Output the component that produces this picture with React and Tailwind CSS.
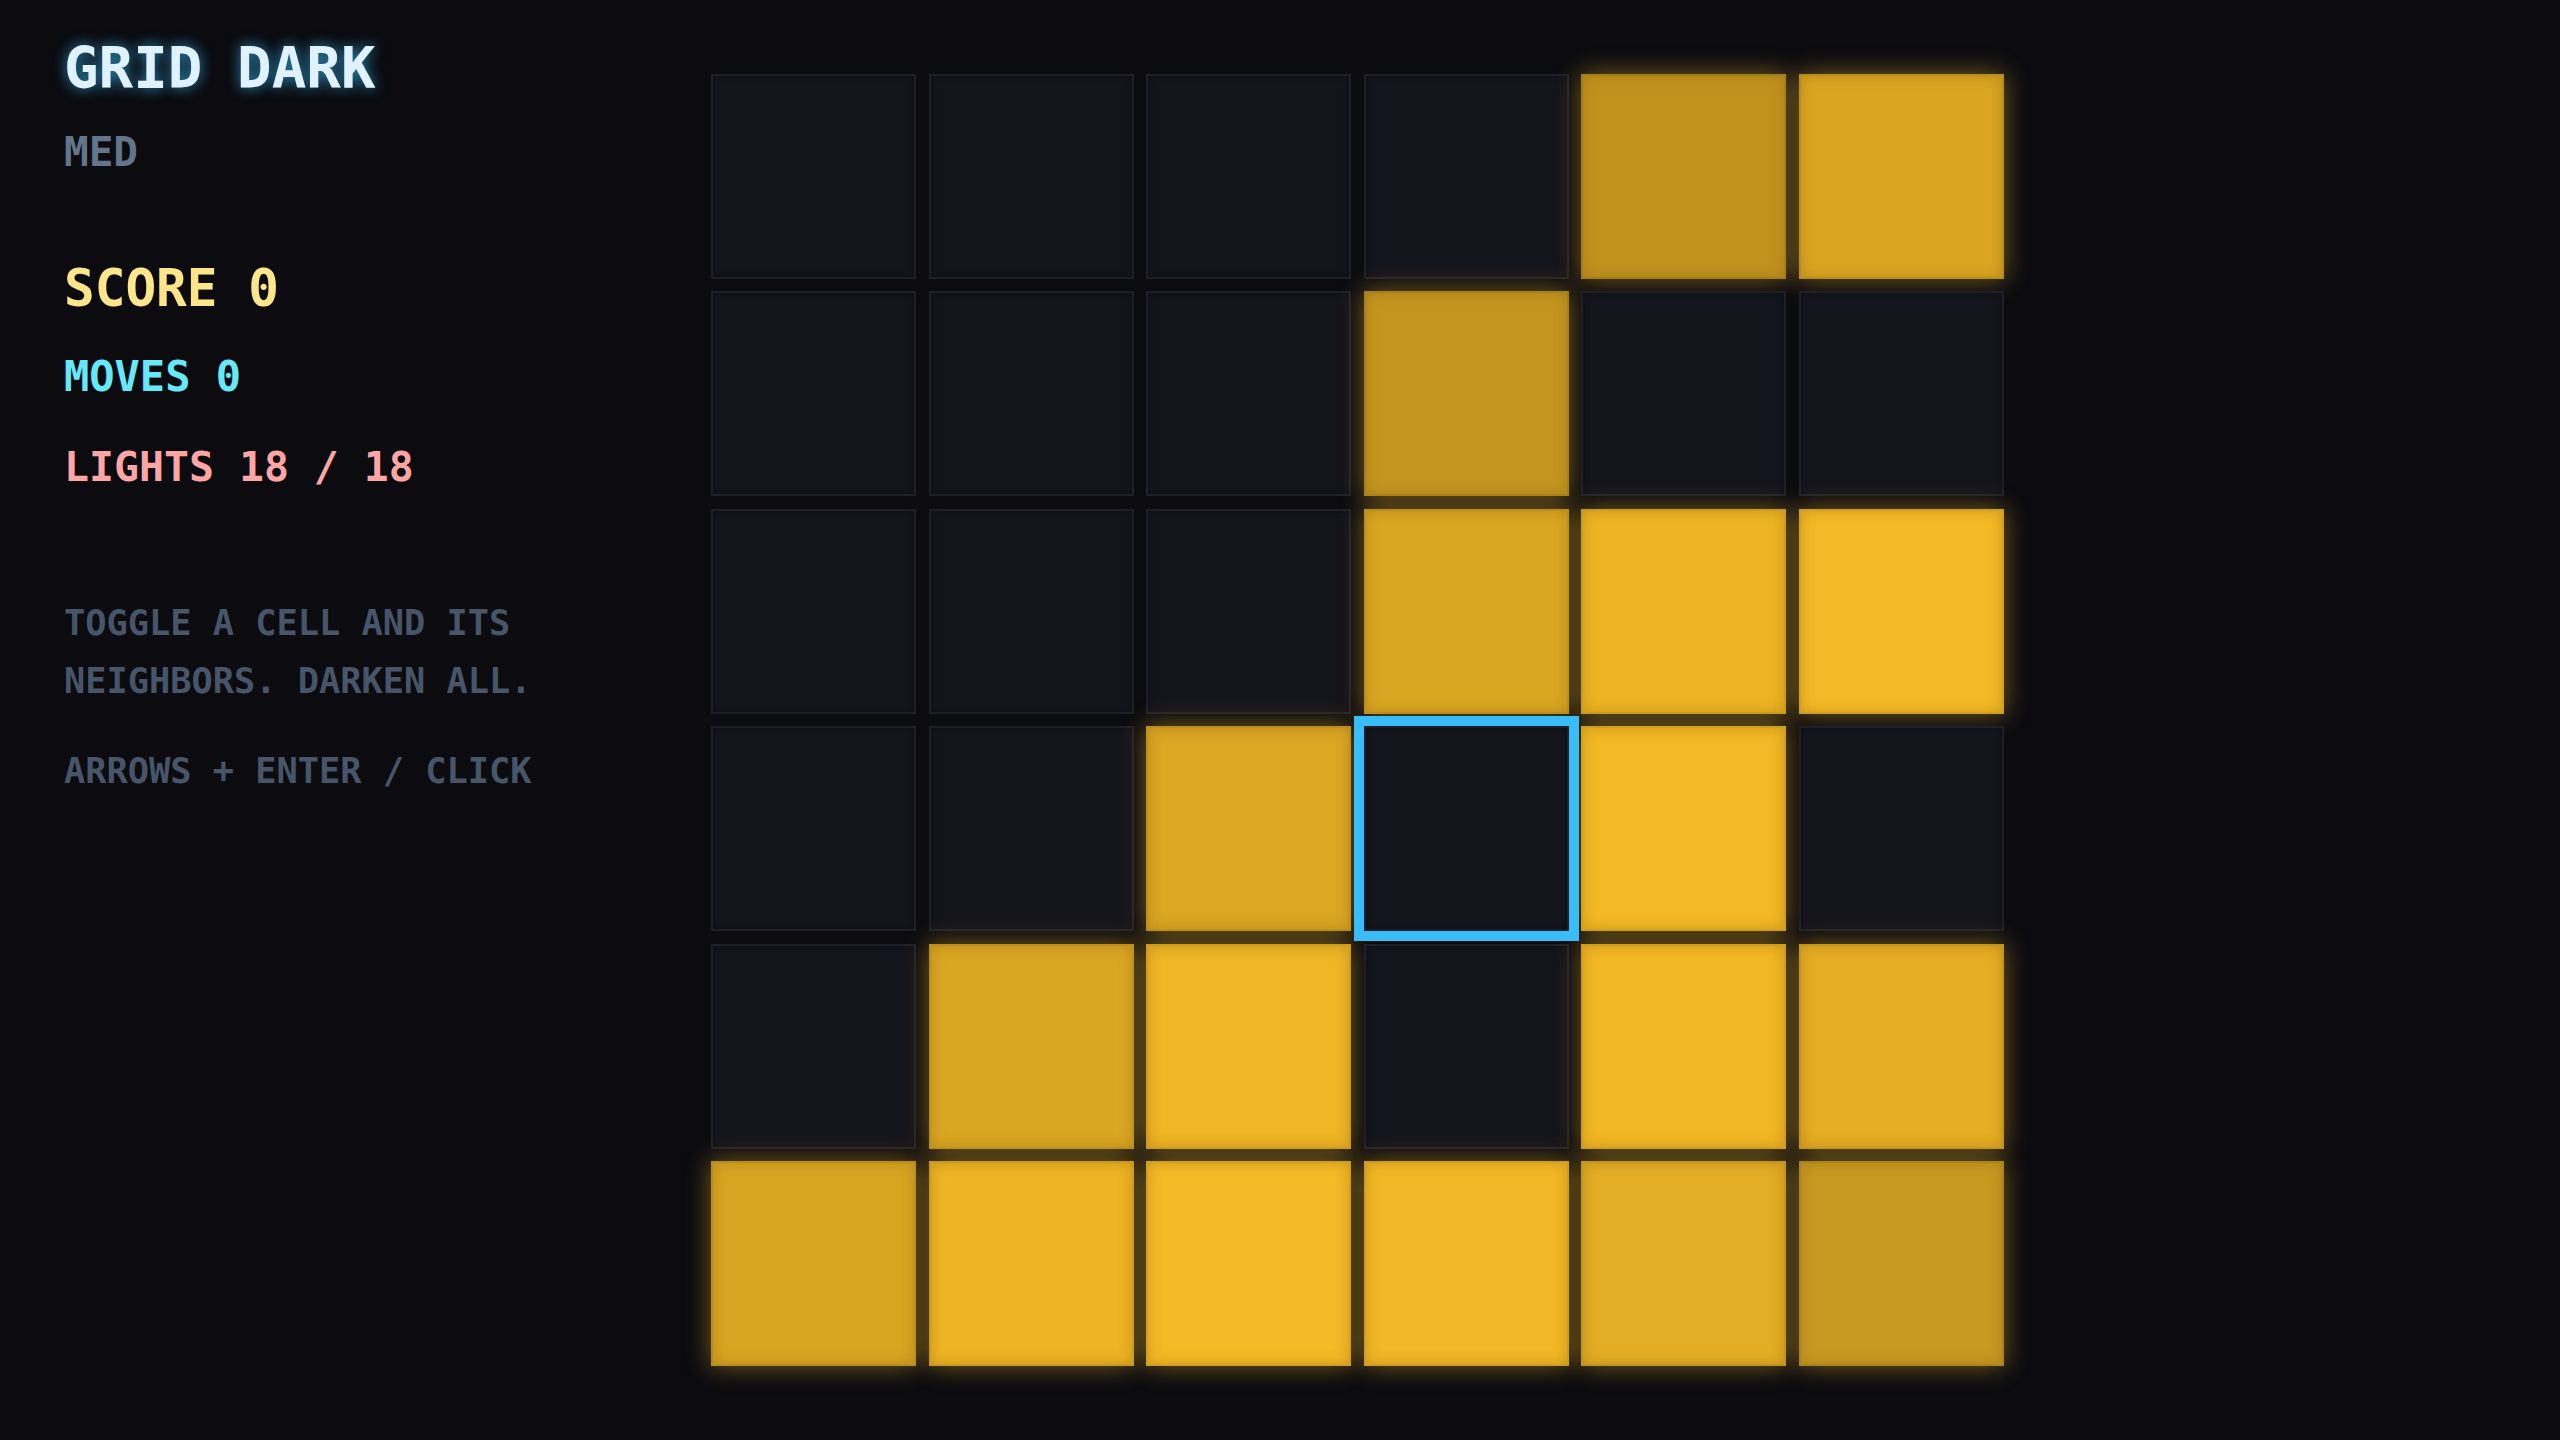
const BOARD = [
  [null, null, null, null, 'bg-[#c0931f]', 'bg-[#daa622]'],
  [null, null, null, 'bg-[#c49620]', null, null],
  [null, null, null, 'bg-[#daa723]', 'bg-[#edb524]', 'bg-[#f5ba27]'],
  [null, null, 'bg-[#dba724]', null, 'bg-[#f4b926]', null],
  [null, 'bg-[#daa723]', 'bg-[#efb625]', null, 'bg-[#f3b826]', 'bg-[#e6ae24]'],
  ['bg-[#d8a622]', 'bg-[#edb524]', 'bg-[#f5ba27]', 'bg-[#f3b827]', 'bg-[#e3ae25]', 'bg-[#c89a22]'],
];

const CURSOR = { r: 3, c: 3 };

function Cell({ lit, active }) {
  const base = 'h-[205px] w-[205px] border-2';
  const look = lit
    ? `${lit} border-black/15 shadow-[0_0_24px_rgba(245,185,40,0.48),inset_0_0_14px_rgba(110,70,0,0.3)]`
    : 'bg-[#14141d] border-[#1f1f2a] shadow-[inset_0_0_6px_rgba(0,0,0,0.35)]';
  const ring = active ? ' relative z-10 outline-solid outline-[10px] outline-[#38bdf8]' : '';
  return <div className={`${base} ${look}${ring}`} />;
}

export default function App() {
  return (
    <div className="flex h-screen w-full overflow-hidden bg-[#0b0b10] font-['DejaVu_Sans_Mono',monospace] font-bold">
      <aside className="w-[711px] shrink-0 pl-[64px] pr-[10px] pt-[40px]">
        <h1 className="text-[57.5px] leading-none text-[#e0f2fe] [text-shadow:0_0_14px_rgba(56,189,248,0.75)]">
          GRID DARK
        </h1>
        <div className="mt-[34px] text-[41px] leading-none text-[#64748b]">MED</div>

        <div className="mt-[90px] text-[51px] leading-none text-[#fde68a]">SCORE 0</div>
        <div className="mt-[42px] text-[42px] leading-none text-[#67e8f9]">MOVES 0</div>
        <div className="mt-[48px] text-[41.5px] leading-none text-[#fca5a5]">LIGHTS 18 / 18</div>

        <p className="mt-[107px] text-[35.3px] leading-[58px] text-[#475569]">
          TOGGLE A CELL AND ITS NEIGHBORS. DARKEN ALL.
        </p>
        <p className="mt-[32px] text-[35.3px] leading-[58px] text-[#475569]">ARROWS + ENTER / CLICK</p>
      </aside>

      <main className="flex flex-1 items-center">
        <div className="grid grid-cols-[repeat(6,205px)] gap-[12.5px]">
          {BOARD.map((row, r) =>
            row.map((lit, c) => (
              <Cell key={`${r}-${c}`} lit={lit} active={r === CURSOR.r && c === CURSOR.c} />
            ))
          )}
        </div>
      </main>
    </div>
  );
}
